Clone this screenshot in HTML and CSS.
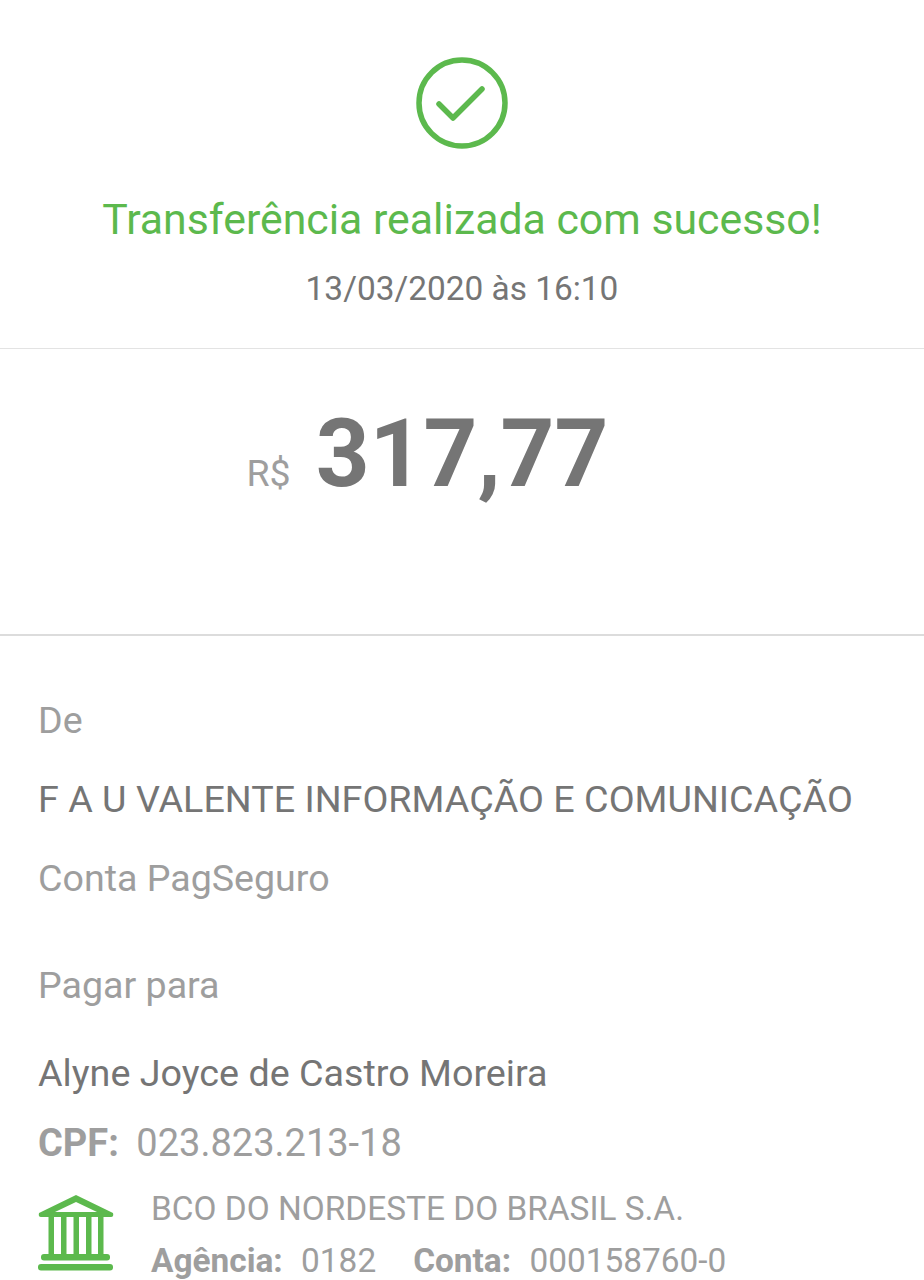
FILE: index.html
```html
<!DOCTYPE html>
<html lang="pt">
<head>
<meta charset="utf-8">
<title>Comprovante</title>
<link rel="stylesheet" href="styles.css">
</head>
<body>
<header class="status">
  <svg class="check" width="92" height="92" viewBox="0 0 92 92" fill="none" stroke="#5cb94d" stroke-width="5.5">
    <circle cx="46" cy="46" r="43"/>
    <path d="M23 47 L37 61 L66 32" stroke-linecap="round" stroke-linejoin="round"/>
  </svg>
  <h1 class="title">Transferência realizada com sucesso!</h1>
  <p class="date">13/03/2020 às 16:10</p>
</header>
<section class="amount">
  <span class="currency">R$</span>
  <span class="value">317,77</span>
</section>
<section class="details">
  <p class="label">De</p>
  <p class="name from">F A U VALENTE INFORMAÇÃO E COMUNICAÇÃO</p>
  <p class="label account">Conta PagSeguro</p>
  <p class="label pay">Pagar para</p>
  <p class="name to">Alyne Joyce de Castro Moreira</p>
  <p class="cpf"><b>CPF:</b> 023.823.213-18</p>
  <div class="bank">
    <svg class="bank-icon" width="76" height="76" viewBox="0 0 76 76" fill="#5cb94d">
      <path d="M38 0 L75 18 Q76 22 73 22 H3 Q0 22 1 18 Z M38 7 L17 17 H59 Z" fill-rule="evenodd"/>
      <rect x="10.5" y="21" width="5.5" height="38"/>
      <rect x="23" y="21" width="5.5" height="38"/>
      <rect x="35.5" y="21" width="5.5" height="38"/>
      <rect x="48" y="21" width="5.5" height="38"/>
      <rect x="60" y="21" width="5.5" height="38"/>
      <rect x="3" y="59" width="69" height="6.5" rx="3"/>
      <rect x="0" y="69" width="75" height="6.5" rx="3"/>
    </svg>
    <div class="bank-text">
      <p class="bank-name">BCO DO NORDESTE DO BRASIL S.A.</p>
      <p class="bank-acc"><b>Agência:</b> <span>0182</span><b class="conta">Conta:</b> <span>000158760-0</span></p>
    </div>
  </div>
</section>
</body>
</html>
```
FILE: styles.css
```css
html, body { margin: 0; padding: 0; background: #fff; }
body { font-family: Roboto, sans-serif; height: 1280px; overflow: hidden; }
p, h1 { margin: 0; font-weight: 400; }
.status { height: 349px; box-sizing: border-box; padding-top: 57px; display: flex; flex-direction: column; align-items: center; border-bottom: 1px solid #e3e3e3; }
.check { display: block; }
.title { margin-top: 45px; font-size: 42.8px; line-height: 50px; color: #5cb94d; }
.date { margin-top: 25px; font-size: 33.4px; line-height: 40px; color: #757575; }
.amount { height: 287px; box-sizing: border-box; padding: 49px 69px 0 0; display: flex; justify-content: center; align-items: baseline; gap: 25px; border-bottom: 2px solid #dcdcdc; }
.currency { font-size: 37.5px; color: #9e9e9e; }
.value { font-size: 94px; line-height: 112px; font-weight: 700; color: #757575; }
.details { padding: 64px 38px 0; }
.label { font-size: 37.6px; line-height: 40px; color: #9e9e9e; }
.name { font-size: 37.7px; line-height: 42px; color: #757575; }
.from { margin-top: 38px; }
.account { margin-top: 38px; }
.pay { margin-top: 67px; }
.to { margin-top: 47px; }
.cpf { margin-top: 28px; font-size: 38px; line-height: 42px; color: #9e9e9e; }
.cpf b { margin-right: 8px; }
.bank { margin-top: 25px; display: flex; gap: 37px; }
.bank-icon { margin-top: 6px; flex: none; }
.bank-name { font-size: 33.4px; line-height: 40px; color: #9e9e9e; }
.bank-acc { margin-top: 13px; font-size: 33.4px; line-height: 38px; color: #9e9e9e; }
.bank-acc span { margin-left: 10px; }
.conta { margin-left: 37px; }
```
